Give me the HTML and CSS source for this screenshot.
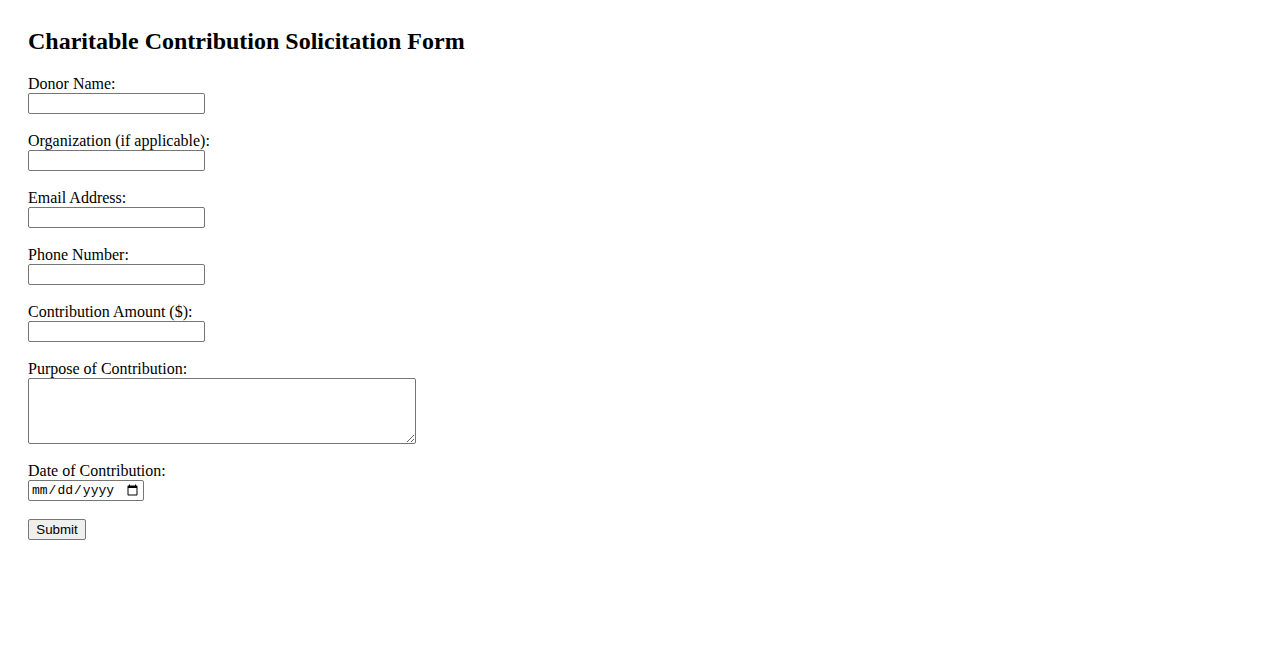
FILE: index.html
```html
<!DOCTYPE html>
<html lang="en">
<head>
<meta charset="utf-8">
<title>Charitable Contribution Solicitation Form</title>
<link rel="stylesheet" href="styles.css">
</head>
<body>
<div class="page">
  <h2 class="title">Charitable Contribution Solicitation Form</h2>
  <form class="form">
    <div class="field">
      <label class="label" for="donor">Donor Name:</label>
      <input class="text-input" type="text" id="donor">
    </div>
    <div class="field">
      <label class="label" for="org">Organization (if applicable):</label>
      <input class="text-input" type="text" id="org">
    </div>
    <div class="field">
      <label class="label" for="email">Email Address:</label>
      <input class="text-input" type="email" id="email">
    </div>
    <div class="field">
      <label class="label" for="phone">Phone Number:</label>
      <input class="text-input" type="tel" id="phone">
    </div>
    <div class="field">
      <label class="label" for="amount">Contribution Amount ($):</label>
      <input class="text-input" type="text" id="amount">
    </div>
    <div class="field">
      <label class="label" for="purpose">Purpose of Contribution:</label>
      <textarea class="textarea" id="purpose"></textarea>
    </div>
    <div class="field">
      <label class="label" for="date">Date of Contribution:</label>
      <input class="date-input" type="date" id="date">
    </div>
    <div class="field">
      <button class="submit" type="submit">Submit</button>
    </div>
  </form>
</div>
</body>
</html>
```

FILE: styles.css
```css
html, body {
  margin: 0;
  padding: 0;
  background: #ffffff;
}

body {
  font-family: "Liberation Serif", "Times New Roman", serif;
  font-size: 16px;
  color: #000000;
}

.page {
  padding: 27px 28px;
}

.title {
  margin: 0 0 19px 0;
  font-size: 24px;
  font-weight: bold;
  line-height: 28px;
}

.form {
  display: flex;
  flex-direction: column;
  align-items: flex-start;
}

.field {
  display: flex;
  flex-direction: column;
  align-items: flex-start;
  margin-bottom: 17px;
}

.label {
  display: block;
  height: 19px;
  line-height: 19px;
}

.text-input {
  box-sizing: border-box;
  width: 177px;
  height: 21px;
  margin: 0;
  padding: 1px 2px;
  border: 1px solid #767676;
  border-radius: 2px;
  font-family: "Liberation Sans", Arial, sans-serif;
  font-size: 13.33px;
  background: #ffffff;
}

.textarea {
  box-sizing: border-box;
  width: 388px;
  height: 66px;
  margin: 0;
  padding: 2px;
  border: 1px solid #767676;
  border-radius: 2px;
  font-family: "Liberation Mono", monospace;
  font-size: 13.33px;
  resize: both;
}

.date-input {
  box-sizing: border-box;
  width: 116px;
  height: 21px;
  margin: 0;
  padding: 1px 2px;
  border: 1px solid #767676;
  border-radius: 2px;
  font-family: "Liberation Mono", monospace;
  font-size: 13px;
  background: #ffffff;
}

.submit {
  box-sizing: border-box;
  width: 58px;
  height: 21px;
  margin: 1px 0 0 0;
  padding: 1px 6px;
  border: 1px solid #767676;
  border-radius: 2px;
  background: #efefef;
  font-family: "Liberation Sans", Arial, sans-serif;
  font-size: 13.33px;
  color: #000000;
}
```
